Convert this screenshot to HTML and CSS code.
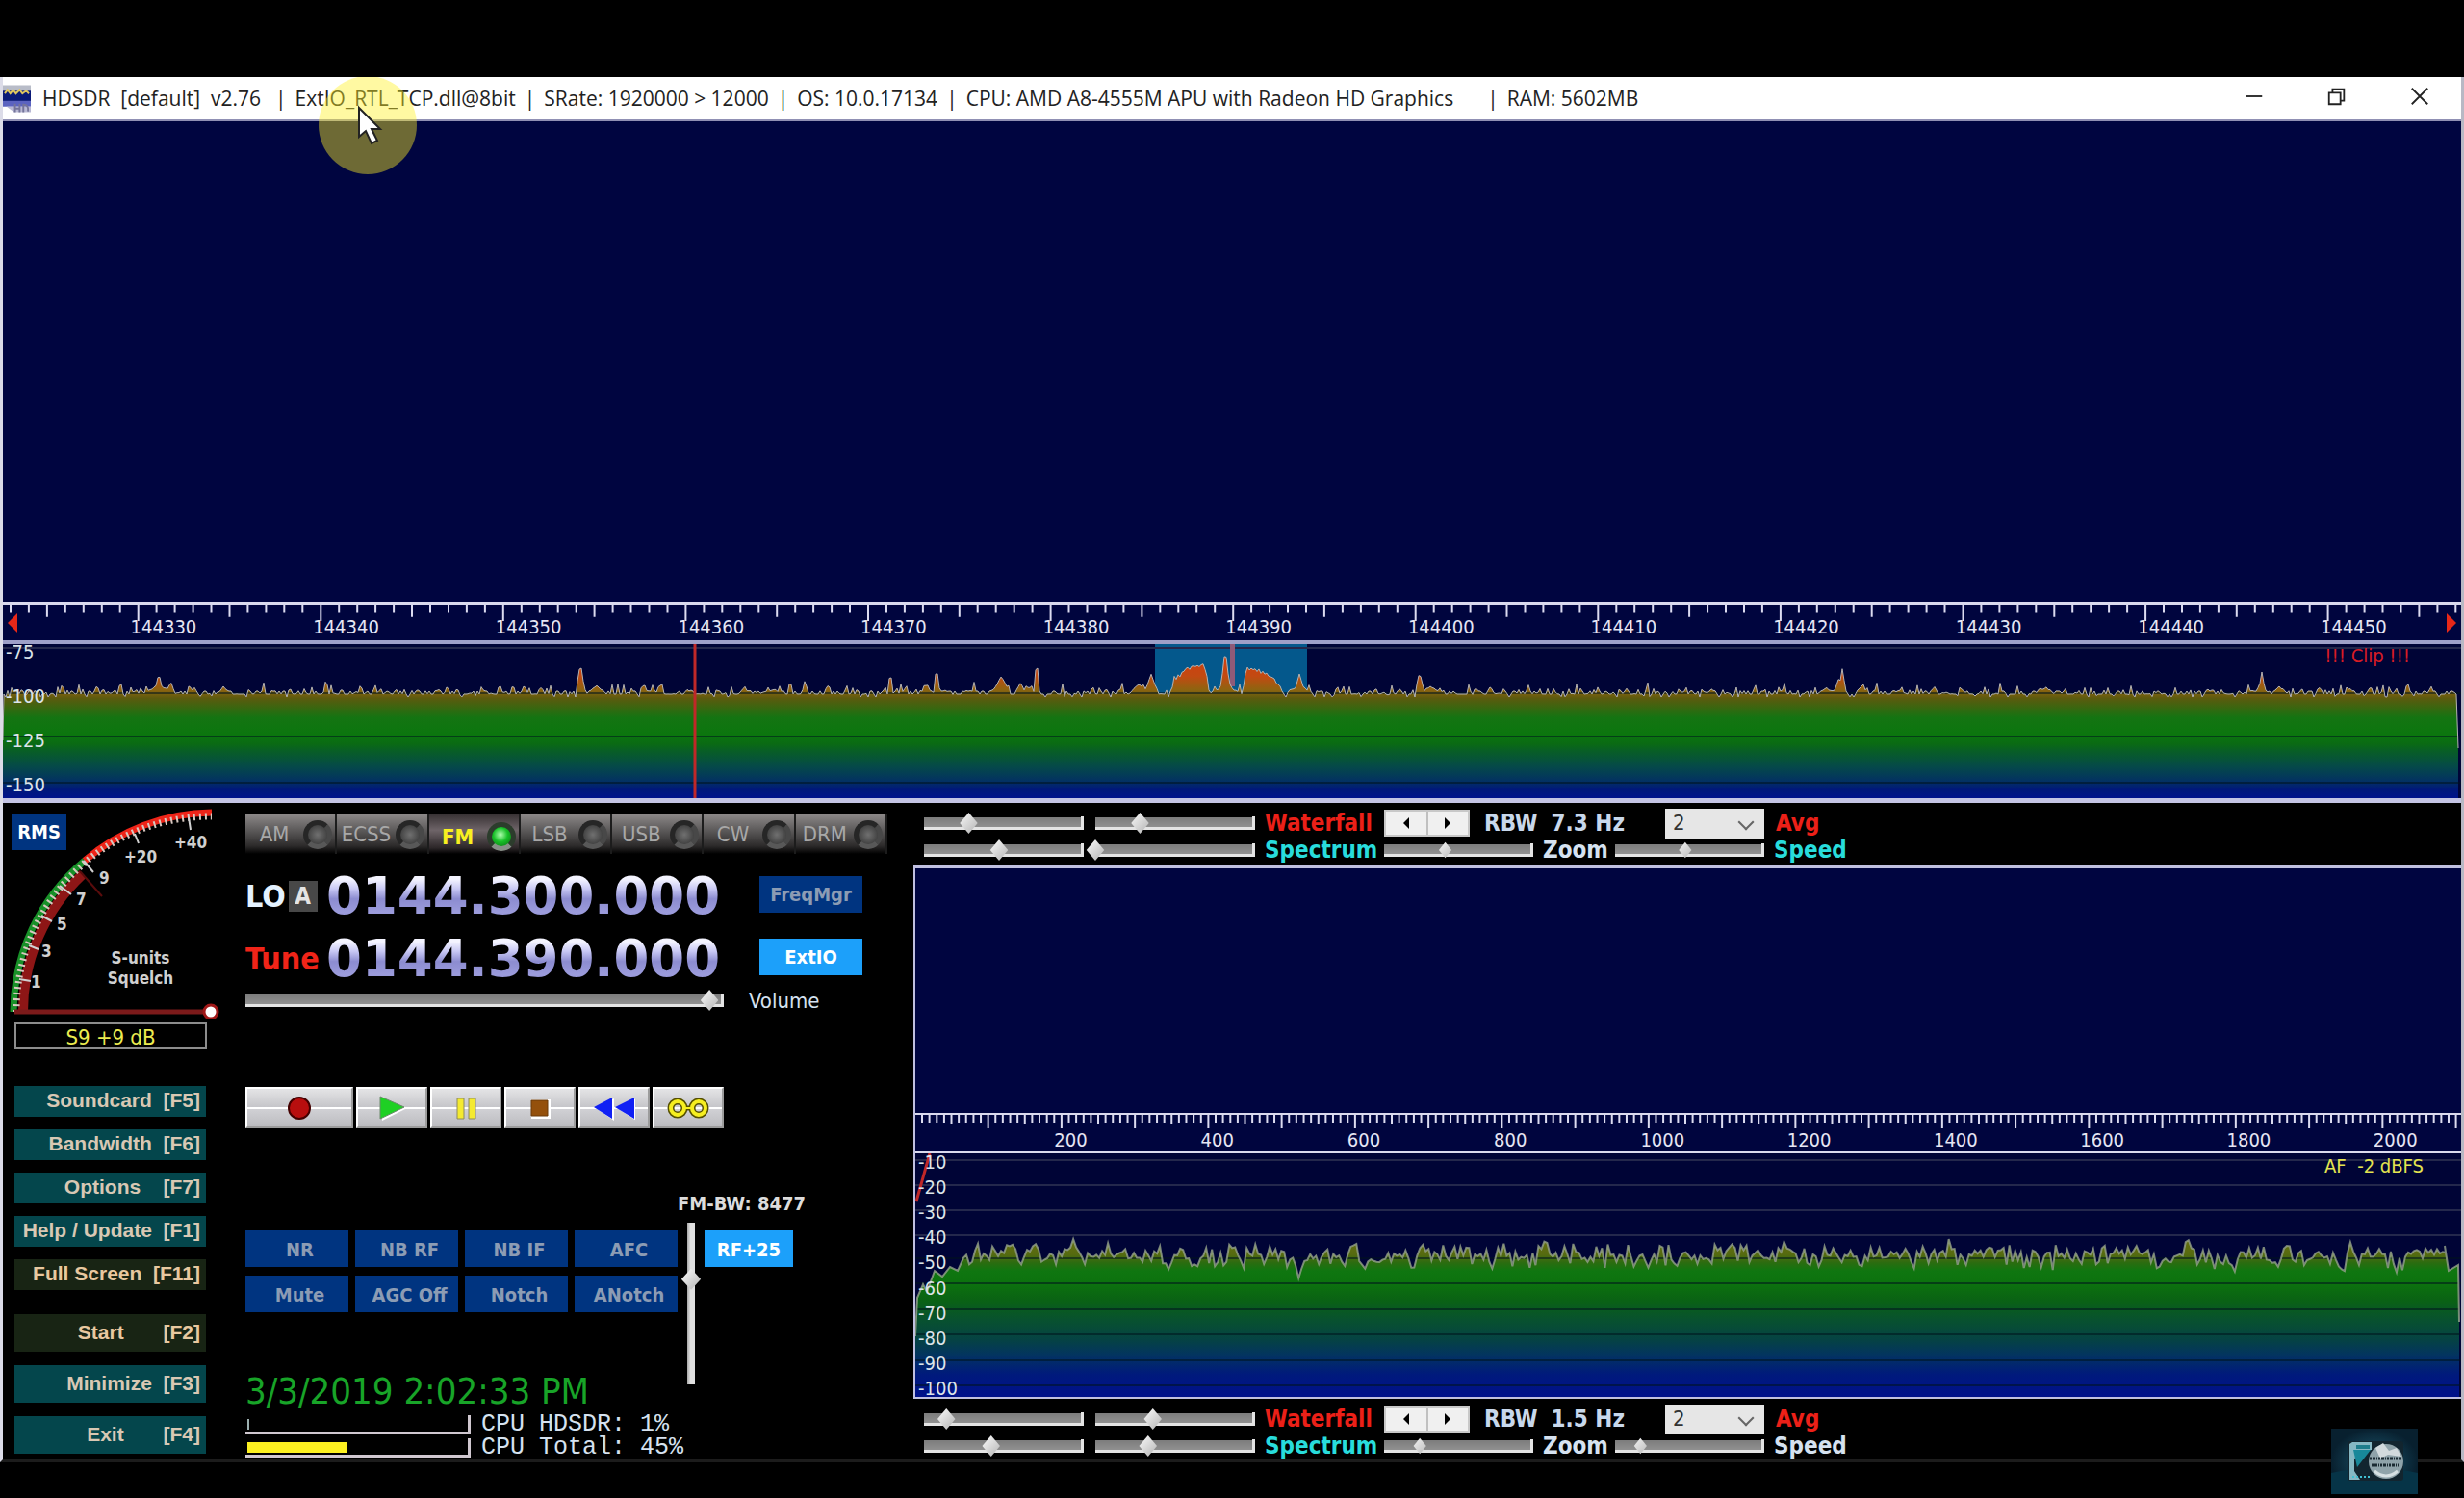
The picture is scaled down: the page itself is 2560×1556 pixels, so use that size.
FILE: index.html
```html
<!DOCTYPE html>
<html lang="en">
<head>
<meta charset="utf-8">
<title>HDSDR</title>
<link rel="stylesheet" href="styles.css">
</head>
<body>
<main class="window">
  <header class="titlebar">
    <svg class="app-icon" viewBox="0 0 30 30" aria-hidden="true">
      <rect width="30" height="8" fill="#b8bcc8"/><rect y="6" width="30" height="11" fill="#0a1a78"/>
      <path d="M2 9l3-4 3 4 3-4 3 4 4-4 3 4 4-3 3 3" stroke="#e0c860" stroke-width="2" fill="none"/>
      <rect y="17" width="30" height="6" fill="#5b63c0"/><path d="M4 23h26v6H12z" fill="#b9b9d4"/>
      <path d="M13 20v9M18 20v9M13 25h5M22 20v9M22 21q6 0 5 7" stroke="#74749a" stroke-width="2" fill="none"/>
    </svg>
    <p class="title">
      <span class="t-app">HDSDR&nbsp; [default]&nbsp; v2.76</span><span>|</span>
      <span>ExtIO_RTL_TCP.dll@8bit</span><span>|</span>
      <span>SRate: 1920000 &gt; 12000</span><span>|</span>
      <span>OS: 10.0.17134</span><span>|</span>
      <span class="t-cpu">CPU: AMD A8-4555M APU with Radeon HD Graphics</span><span>|</span>
      <span>RAM: 5602MB</span>
    </p>
    <div class="win-buttons">
      <button aria-label="Minimize window"><svg viewBox="0 0 24 24"><path d="M3 12h18" /></svg></button>
      <button aria-label="Restore window"><svg viewBox="0 0 24 24"><path d="M3 8h13v13H3zM7 8V4h13v13h-4"/></svg></button>
      <button aria-label="Close window"><svg viewBox="0 0 24 24"><path d="M3 3l18 18M21 3L3 21"/></svg></button>
    </div>
  </header>

  <section class="rf-waterfall" aria-label="RF waterfall"></section>

  <section class="scale rf-scale">
    <svg class="ticks" id="rf-ticks" viewBox="0 0 2554 36" preserveAspectRatio="none"></svg>
    <svg class="edge" viewBox="0 0 10 20"><path d="M10 0v20L0 10z"/></svg>
    <div class="rf-labels">
      <span></span><span>144330</span><span>144340</span><span>144350</span><span>144360</span><span>144370</span><span>144380</span><span>144390</span><span>144400</span><span>144410</span><span>144420</span><span>144430</span><span>144440</span><span>144450</span>
    </div>
    <svg class="edge edge-right" viewBox="0 0 10 20"><path d="M0 0v20L10 10z"/></svg>
  </section>

  <section class="chart rf-chart">
    <svg id="rf-trace" viewBox="0 0 2554 160" preserveAspectRatio="none">
      <defs>
        <linearGradient id="rf-fill" gradientUnits="userSpaceOnUse" x1="0" y1="16" x2="0" y2="160">
          <stop offset="0" stop-color="#d04010"/><stop offset=".12" stop-color="#c24a12"/><stop offset=".22" stop-color="#8e6410"/>
          <stop offset=".28" stop-color="#5c5a0e"/><stop offset=".42" stop-color="#147412"/><stop offset=".54" stop-color="#0b760e"/>
          <stop offset=".61" stop-color="#0a6a14"/><stop offset=".66" stop-color="#085e26"/><stop offset=".77" stop-color="#054a48"/>
          <stop offset=".87" stop-color="#033360"/><stop offset=".94" stop-color="#00187a"/><stop offset="1" stop-color="#00128c"/>
        </linearGradient>
      </defs>
      <rect x="1197" width="158" height="52" fill="#04588c"/>
      <path d="M0 4H2554" class="grid-light"/>
      <path class="fill" fill="url(#rf-fill)"/>
      <path d="M0 51H2554M0 96H2554M0 144H2554" class="grid-dark"/>
      <rect x="1275" width="5" height="44" fill="#8e5a78"/>
      <path class="line"/>
      <path d="M719 0V160" class="tune-line"/>
    </svg>
    <div class="db-labels"><span>-75</span><span>-100</span><span>-125</span><span>-150</span></div>
    <strong class="clip">!!! Clip !!!</strong>
  </section>

  <section class="lower">
    <aside class="left-col">
      <div class="meter">
        <svg class="gauge" viewBox="3 834 230 224" role="img" aria-label="S-meter">
          <path d="M24 1051A195 195 0 0 1 86 908" class="level"/>
          <path d="M14 1051A205 205 0 0 1 88 894" class="arc-green"/>
          <path d="M88 894A205 205 0 0 1 220 844" class="arc-red"/>
          <path d="M17 1051A202 202 0 0 1 220 848" class="arc-ticks"/>
          <path d="M83 905L106 931" class="needle"/>
          <path d="M20 1017l12 2M30 982l10 4M43 951l11 6M62 920l12 9M87 894l10 12M140 866l4 10M196 849l2 13" class="majors"/>
          <g class="gauge-text">
            <text x="32" y="1026">1</text><text x="43" y="994">3</text><text x="59" y="966">5</text><text x="79" y="940">7</text><text x="103" y="918">9</text>
            <text x="146" y="896" text-anchor="middle">+20</text><text x="198" y="881" text-anchor="middle">+40</text>
            <text x="146" y="1001" text-anchor="middle">S-units</text><text x="146" y="1022" text-anchor="middle">Squelch</text>
          </g>
          <path d="M15 1051H214" class="squelch"/>
          <circle cx="219" cy="1051" r="7" fill="#fff" stroke="#a01818" stroke-width="3"/>
        </svg>
        <button class="blue rms">RMS</button>
      </div>
      <output class="s-value">S9 +9 dB</output>
      <nav class="menu">
        <button>Soundcard&nbsp; [F5]</button>
        <button>Bandwidth&nbsp; [F6]</button>
        <button>Options&nbsp;&nbsp;&nbsp; [F7]</button>
        <button>Help / Update&nbsp; [F1]</button>
        <button class="dark">Full Screen&nbsp; [F11]</button>
      </nav>
      <nav class="menu tall">
        <button class="dark">Start&nbsp;&nbsp;&nbsp;&nbsp;&nbsp;&nbsp; [F2]</button>
        <button>Minimize&nbsp; [F3]</button>
        <button>Exit&nbsp;&nbsp;&nbsp;&nbsp;&nbsp;&nbsp; [F4]</button>
      </nav>
    </aside>

    <section class="center-col">
      <div class="modes">
        <button><span>AM</span><i></i></button><button><span>ECSS</span><i></i></button><button class="on"><span>FM</span><i></i></button><button><span>LSB</span><i></i></button><button><span>USB</span><i></i></button><button><span>CW</span><i></i></button><button><span>DRM</span><i></i></button>
      </div>
      <div class="freqs">
        <div class="freq-label lo"><span>LO</span><button>A</button></div>
        <output class="digits">0144.300.000</output>
        <button class="blue">FreqMgr</button>
        <div class="freq-label tune">Tune</div>
        <output class="digits">0144.390.000</output>
        <button class="blue lit">ExtIO</button>
      </div>
      <div class="volume">
        <input class="slider" id="volume" type="range" value="97">
        <label for="volume">Volume</label>
      </div>
      <div class="transport">
        <button aria-label="Record"><svg viewBox="0 0 44 30"><circle cx="22" cy="15" r="11" fill="#b80e0e" stroke="#400" stroke-width="2"/></svg></button>
        <button aria-label="Play"><svg viewBox="0 0 44 30"><path d="M12 4v24L36 16z" fill="#fff"/><path d="M10 3v23l25-12z" fill="#1fd024" stroke="#6a8a6a"/></svg></button>
        <button aria-label="Pause"><svg viewBox="0 0 44 30"><path d="M13 5h7v21h-7zM25 5h7v21h-7z" fill="#f4ea30" stroke="#8c8a60"/></svg></button>
        <button aria-label="Stop"><svg viewBox="0 0 44 30"><path d="M13 6h20v20H13z" fill="#fff"/><path d="M13 7h17v16H13z" fill="#94500c" stroke="#6a3a0a"/></svg></button>
        <button aria-label="Rewind"><svg viewBox="0 0 44 30"><path d="M22 5v23L3 15zM45 5v23L25 15z" fill="#fff"/><path d="M20 4v22L1 14zM43 4v22L23 14z" fill="#1020f4"/></svg></button>
        <button aria-label="Loop"><svg viewBox="0 0 44 30"><g fill="none"><circle cx="11" cy="15" r="7" stroke="#554f00" stroke-width="7"/><circle cx="33" cy="15" r="7" stroke="#554f00" stroke-width="7"/><path d="M17 15h10" stroke="#554f00" stroke-width="5"/><circle cx="11" cy="15" r="7" stroke="#f6ee20" stroke-width="4"/><circle cx="33" cy="15" r="7" stroke="#f6ee20" stroke-width="4"/><path d="M17 15h10" stroke="#f6ee20" stroke-width="2"/></g></svg></button>
      </div>
      <label class="fm-bw" for="gain">FM-BW: 8477</label>
      <div class="dsp">
        <div class="dsp-left">
          <div class="dsp-grid">
            <button class="blue">NR</button><button class="blue">NB RF</button><button class="blue">NB IF</button><button class="blue">AFC</button>
            <button class="blue">Mute</button><button class="blue">AGC Off</button><button class="blue">Notch</button><button class="blue">ANotch</button>
          </div>
          <time class="clock" datetime="2019-03-03T14:02:33">3/3/2019 2:02:33 PM</time>
          <div class="cpu"><span class="cpu-bar"><i class="idle"></i></span><span>CPU HDSDR: 1%</span></div>
          <div class="cpu"><span class="cpu-bar"><i class="busy" style="width:45%"></i></span><span>CPU Total: 45%</span></div>
        </div>
        <input class="vslider" id="gain" type="range" value="35">
        <button class="blue lit rf-gain">RF+25</button>
      </div>
    </section>

    <section class="right-col">
      <div class="controls">
        <div class="row">
          <input class="slider" type="range" value="28" aria-label="Waterfall low"><input class="slider" type="range" value="28" aria-label="Waterfall high">
          <span class="name red">Waterfall</span>
          <span class="steps"><button aria-label="RBW down"><svg viewBox="0 0 8 12"><path d="M7 0v12L1 6z"/></svg></button><button aria-label="RBW up"><svg viewBox="0 0 8 12"><path d="M1 0v12l6-6z"/></svg></button></span>
          <span class="rbw"><span>RBW</span><span>7.3 Hz</span></span>
          <span class="pick"><select id="avg1"><option>2</option></select></span>
          <label class="red" for="avg1">Avg</label>
        </div>
        <div class="row">
          <input class="slider" type="range" value="47" aria-label="Spectrum low"><input class="slider" type="range" value="0" aria-label="Spectrum high">
          <span class="name cyan">Spectrum</span>
          <input class="slider small" id="zoom1" type="range" value="41"><label class="zoom" for="zoom1">Zoom</label>
          <input class="slider small" id="speed1" type="range" value="47"><label class="cyan" for="speed1">Speed</label>
        </div>
      </div>

      <div class="af">
        <div class="af-waterfall"></div>
        <div class="scale af-scale">
          <svg class="ticks" id="af-ticks" viewBox="0 0 1605 38" preserveAspectRatio="none"></svg>
          <div class="af-labels"><span></span><span>200</span><span>400</span><span>600</span><span>800</span><span>1000</span><span>1200</span><span>1400</span><span>1600</span><span>1800</span><span>2000</span></div>
        </div>
        <div class="chart af-chart">
          <svg id="af-trace" viewBox="0 0 1605 253" preserveAspectRatio="none">
            <defs>
              <linearGradient id="af-fill" gradientUnits="userSpaceOnUse" x1="0" y1="85" x2="0" y2="253">
                <stop offset="0" stop-color="#6a7010"/><stop offset=".12" stop-color="#566a10"/><stop offset=".17" stop-color="#2c6c10"/><stop offset=".22" stop-color="#0f7610"/>
                <stop offset=".3" stop-color="#0c720e"/><stop offset=".4" stop-color="#0a6214"/><stop offset=".52" stop-color="#08522e"/>
                <stop offset=".65" stop-color="#054244"/><stop offset=".74" stop-color="#033460"/><stop offset=".86" stop-color="#001a7c"/><stop offset="1" stop-color="#00108a"/>
              </linearGradient>
            </defs>
            <path d="M0 7H1605M0 33H1605M0 59H1605M0 85H1605" class="grid-light"/>
            <path class="fill" fill="url(#af-fill)"/>
            <path d="M0 109H1605M0 135H1605M0 162H1605M0 188H1605M0 215H1605M0 241H1605" class="grid-dark"/>
            <path class="line af-line"/>
            <path d="M15 0L1 50" class="tune-line"/>
          </svg>
          <div class="db-labels"><span>-10</span><span>-20</span><span>-30</span><span>-40</span><span>-50</span><span>-60</span><span>-70</span><span>-80</span><span>-90</span><span>-100</span></div>
          <span class="af-level">AF&nbsp; -2 dBFS</span>
        </div>
      </div>

      <div class="controls">
        <div class="row">
          <input class="slider" type="range" value="14" aria-label="AF waterfall low"><input class="slider" type="range" value="36" aria-label="AF waterfall high">
          <span class="name red">Waterfall</span>
          <span class="steps"><button aria-label="AF RBW down"><svg viewBox="0 0 8 12"><path d="M7 0v12L1 6z"/></svg></button><button aria-label="AF RBW up"><svg viewBox="0 0 8 12"><path d="M1 0v12l6-6z"/></svg></button></span>
          <span class="rbw"><span>RBW</span><span>1.5 Hz</span></span>
          <span class="pick"><select id="avg2"><option>2</option></select></span>
          <label class="red" for="avg2">Avg</label>
        </div>
        <div class="row">
          <input class="slider" type="range" value="42" aria-label="AF spectrum low"><input class="slider" type="range" value="33" aria-label="AF spectrum high">
          <span class="name cyan">Spectrum</span>
          <input class="slider small" id="zoom2" type="range" value="24"><label class="zoom" for="zoom2">Zoom</label>
          <input class="slider small" id="speed2" type="range" value="17"><label for="speed2">Speed</label>
        </div>
      </div>
    </section>
  </section>

  <svg class="spotlight" viewBox="0 0 104 102" aria-hidden="true">
    <circle cx="52" cy="50" r="51" fill="#fff028" fill-opacity=".43"/>
    <path d="M43 32v30l7-6 6 13 6-3-6-12h9z" fill="#fff" stroke="#222" stroke-width="2"/>
  </svg>
</main>

<svg class="channel-logo" viewBox="0 0 90 68" aria-hidden="true">
  <defs><radialGradient id="lg"><stop offset="0" stop-color="#1d5a72"/><stop offset="1" stop-color="#08202f"/></radialGradient></defs>
  <rect width="90" height="68" fill="url(#lg)"/><path d="M0 46q45-10 90 0v22H0z" fill="#063447"/>
  <rect x="17" y="13" width="58" height="41" rx="3" fill="#12252f"/>
  <path d="M22 14h20v8H30l-6 10v12l6 9H19V16z" fill="#86b8c4"/><path d="M26 17h14v4H26z" fill="#1e7d8c"/>
  <path d="M23 22h18l-14 18z" fill="#18889a"/>
  <circle cx="57" cy="34" r="18" fill="#8fa3aa"/><path d="M46 20l8-5 6 8 8-3 5 9-14-2-8 4z" fill="#d2dadd"/>
  <path d="M40 31h34M42 38h28" stroke="#1a2a32" stroke-width="3" stroke-dasharray="2 1 3 1 1 1"/>
  <path d="M45 44q12 10 24 0" stroke="#d6e0e3" stroke-width="3" fill="none"/><path d="M22 50h18" stroke="#42c0d2" stroke-width="2" stroke-dasharray="2 2"/>
</svg>
<script src="spectrum.js"></script>
</body>
</html>
```
FILE: spectrum.js
```js
// Draws the frequency rulers and the two noise-floor traces.
function rng(seed) {
  return () => {
    seed = (seed * 1664525 + 1013904223) % 4294967296;
    return seed / 4294967296;
  };
}

function ruler(id, first, step, count, fiveEvery, tenEvery, sizes, width) {
  let d = '';
  for (let i = 0; i < count; i++) {
    const x = first + i * step;
    if (x < 4 || x > width - 2) continue;
    const len = i % tenEvery === 0 ? sizes[2] : i % fiveEvery === 0 ? sizes[1] : sizes[0];
    d += `M${x.toFixed(1)} 0v${len}`;
  }
  document.getElementById(id).innerHTML = `<path d="${d}"/>`;
}

function trace(id, points, height) {
  const svg = document.getElementById(id);
  const line = points.map(p => p[0].toFixed(1) + ' ' + p[1].toFixed(1)).join('L');
  const last = points[points.length - 1][0];
  svg.querySelector('.fill').setAttribute('d', `M0 ${height}L${line}L${last} ${height}Z`);
  svg.querySelector('.line').setAttribute('d', 'M' + line);
}

ruler('rf-ticks', 140.7 - 189.6, 18.958, 150, 5, 10, [8, 12, 16], 2554);
ruler('af-ticks', -0.6, 7.62, 215, 5, 10, [8, 10, 14], 1605);

// RF peaks: [x, y of tip, half width]
const peaks = [[122, 37, 3], [162, 28, 4], [162, 41, 14], [174, 38, 5], [230, 44, 8], [600, 18, 5], [617, 42, 10], [666, 39, 4],
  [800, 46, 14], [818, 37, 3], [833, 37, 3], [922, 26, 3], [960, 39, 4], [970, 20, 3], [1037, 33, 10], [1057, 39, 5],
  [1074, 12, 3], [1180, 40, 10], [1193, 31, 8], [1270, 2, 5], [1270, 40, 14], [1347, 31, 6], [1347, 43, 14],
  [1472, 28, 5], [1484, 43, 12], [1911, 25, 4], [1908, 34, 6], [1932, 40, 5], [1895, 45, 10], [2122, 44, 9],
  [2347, 28, 4], [2346, 40, 7], [2365, 43, 8]];
// Outline of the two FM lobes inside the passband
const lobes = [[1214, 51], [1216, 34], [1226, 27], [1232, 22], [1240, 22], [1247, 17], [1250, 24], [1254, 50],
  [1287, 52], [1291, 26], [1294, 22], [1304, 24], [1312, 28], [1318, 30], [1325, 38], [1328, 50]];
function lobeAt(x) {
  for (let i = 1; i < lobes.length; i++) {
    const [x0, y0] = lobes[i - 1], [x1, y1] = lobes[i];
    if (x >= x0 && x <= x1) return y0 + (y1 - y0) * (x - x0) / (x1 - x0);
  }
  return 60;
}

let rand = rng(20190303);
const rf = [[0, 100]];
for (let x = 1; x < 2551; x += 2) {
  const n = rand();
  let y = 52 - Math.pow(n, 6) * 10 + (rand() < 0.16 ? 3 : 0);
  if (rand() < 0.3) y -= 3;
  for (const [px, py, w] of peaks) {
    const k = Math.abs(x - px) / w;
    if (k < 1) y = Math.min(y, py + (50 - py) * k + rand() * 2);
  }
  const l = lobeAt(x);
  if (l < y) y = l + rand() * 5;
  rf.push([x, y]);
}
rf.push([2551, 108]);
trace('rf-trace', rf, 160);

rand = rng(144390);
const af = [[0, 190], [2, 150], [8, 136], [12, 144], [20, 122], [28, 128], [36, 118], [44, 122]];
let drift = 0;
for (let x = 50; x < 1590; x += 3) {
  drift = drift * 0.5 + (rand() - 0.5) * 12;
  const dip = rand() < 0.06 ? 9 : 0;
  af.push([x, 106 + drift + (rand() - 0.5) * 18 + dip]);
}
af.push([1588, 96], [1592, 122], [1602, 116], [1603, 175]);
trace('af-trace', af, 253);
```
FILE: styles.css
```css
* { box-sizing: border-box; }

body {
  margin: 0;
  min-height: 100vh;
  padding: 80px 0 37px;
  display: flex;
  flex-direction: column;
  background: #000;
  color: #d6e2f0;
  font-family: "DejaVu Sans Condensed", "DejaVu Sans", sans-serif;
  font-size: 20px;
  overflow-x: hidden;
}

button, input, select { font: inherit; color: inherit; border: 0; margin: 0; padding: 0; }

.window {
  flex: 1;
  display: flex;
  flex-direction: column;
  position: relative;
  border-left: 3px solid #dcdce8;
  border-right: 3px solid #b8b8c4;
  border-bottom: 3px solid #1c1c1c;
}

/* Title bar */
.titlebar {
  height: 46px;
  display: flex;
  align-items: center;
  background: #fff;
  border-bottom: 2px solid #9090b4;
  color: #222;
}
.app-icon { width: 29px; height: 30px; margin-top: 2px; }
.title {
  flex: 1;
  margin: 0 0 0 12px;
  display: flex;
  gap: 9px;
  font-family: "Open Sans", "Noto Sans", sans-serif;
  font-size: 21px;
  line-height: 42px;
  white-space: nowrap;
}
.t-app { margin-right: 6px; }
.t-cpu { margin-right: 26px; }
.win-buttons { display: flex; }
.win-buttons button { width: 86px; height: 40px; background: none; }
.win-buttons svg { width: 22px; height: 22px; fill: none; stroke: #222; stroke-width: 2; }

/* RF display */
.rf-waterfall { flex: 1; min-height: 200px; background: #000540; }
.scale, .chart { display: grid; }
.scale > *, .chart > * { grid-area: 1 / 1; }
.scale {
  background: #00053e;
  color: #e6e6f4;
  border-top: 3px solid #dadaee;
}
.ticks { width: 100%; height: 100%; }
.ticks path { stroke: #dcdcf0; stroke-width: 2; vector-effect: non-scaling-stroke; }
.rf-scale { height: 40px; }
.rf-labels, .af-labels { display: grid; align-items: end; line-height: 22px; }
.rf-labels { grid-template-columns: 1326fr repeat(12, 1896fr) 1460fr; padding-bottom: 4px; }
.edge { width: 10px; height: 20px; margin: 9px 5px; fill: #e82818; }
.edge-right { justify-self: end; }

.chart { background: #000436; border-top: 4px solid #9ea0c8; }
.chart svg { width: 100%; height: 100%; display: block; }
.grid-light, .grid-dark, .line, .tune-line { fill: none; vector-effect: non-scaling-stroke; }
.grid-light { stroke: #24284c; stroke-width: 2; }
.grid-dark { stroke: #00141e; stroke-opacity: .55; stroke-width: 2; }
.line { stroke: #b4b4b4; stroke-width: 1; }
.af-line { stroke: #96a48c; stroke-width: 2; stroke-opacity: .8; }
.tune-line { stroke: #c02828; stroke-width: 3; }
.rf-chart { height: 169px; border-bottom: 5px solid #c4c4e4; }
.db-labels {
  display: flex;
  flex-direction: column;
  justify-content: space-between;
  justify-self: start;
  padding-left: 3px;
  line-height: 18px;
  color: #dce4ea;
}
.rf-chart .db-labels { padding-bottom: 6px; line-height: 16px; }
.clip { justify-self: end; padding-right: 53px; font-weight: 400; line-height: 24px; color: #d81c24; }

/* Lower half */
.lower { display: grid; grid-template-columns: 246px 700px 1fr; background: #000; }

.left-col { display: flex; flex-direction: column; }
.meter { display: grid; height: 224px; }
.meter > * { grid-area: 1 / 1; }
.gauge { width: 230px; height: 224px; }
.gauge path { fill: none; }
.gauge .level { stroke: #8e1616; stroke-width: 10; }
.gauge .arc-green { stroke: #189028; stroke-width: 7; }
.gauge .arc-red { stroke: #ee2418; stroke-width: 7; }
.gauge .arc-ticks { stroke: #d8c8c0; stroke-width: 7; stroke-dasharray: 2 4; }
.gauge .needle { stroke: #5a0c0c; stroke-width: 2; }
.gauge .majors { stroke: #d0d0d0; stroke-width: 2; }
.gauge .squelch { stroke: #7c1a1a; stroke-width: 5; }
.gauge-text { fill: #d0d0d0; font-size: 17px; font-weight: 700; }

.blue {
  height: 38px;
  background: #003480;
  color: #8c9cb4;
  font-weight: 700;
  white-space: nowrap;
}
.blue.lit { background: #1ca0fa; color: #fff; }
.rms { width: 57px; margin: 11px 0 0 9px; color: #fff; }
.s-value {
  margin: 4px 34px 0 12px;
  height: 28px;
  border: 2px solid #8c8c8c;
  line-height: 28px;
  font-size: 22px;
  text-align: center;
  color: #ecec50;
}
.menu {
  margin: 38px 35px 0 12px;
  display: flex;
  flex-direction: column;
  gap: 13px;
}
.menu.tall { margin-top: 25px; gap: 14px; }
.menu button {
  height: 32px;
  padding: 0 6px 2px 0;
  background: #04464c;
  color: #d8c8b4;
  font: 700 21px/26px "Liberation Sans", sans-serif;
  text-align: right;
  white-space: nowrap;
}
.menu.tall button { height: 39px; }
.menu .dark { background: #182414; color: #e8c8a0; }

.center-col { padding: 12px 0 0 6px; }
.modes { display: flex; width: 667px; margin-bottom: 11px; }
.modes button {
  flex: 1;
  height: 41px;
  display: flex;
  align-items: center;
  border-right: 2px solid #1c1c1c;
  background: linear-gradient(#8c8888, #565454 45%, #2c2a2a 80%, #000);
  color: #a8a8a8;
  font-size: 22px;
}
.modes span { flex: 1; text-align: center; }
.modes i {
  width: 30px;
  height: 30px;
  margin-right: 3px;
  border-radius: 50%;
  border: 5px solid #262626;
  border-right-color: #484848;
  border-bottom-color: #585858;
  background: radial-gradient(#707070, #303030);
}
.modes .on { padding-top: 5px; color: #f8f020; font-weight: 700; background: linear-gradient(#383234, #6e6468 40%, #2c2628 85%, #000); }
.modes .on i { background: radial-gradient(circle at 45% 40%, #b0ffb0, #18c028 45%, #087010); border-color: #2c3c2c; border-bottom-color: #889088; }

.freqs {
  display: grid;
  grid-template-columns: 84px 450px 107px;
  grid-template-rows: 65px 65px;
  align-items: center;
}
.freqs .blue { margin-bottom: 3px; }
.freq-label { font-size: 32px; font-weight: 700; }
.lo { display: flex; align-items: center; gap: 3px; color: #e4f2ff; }
.lo button { width: 30px; height: 32px; background: #484848; color: #e4e4e4; font-size: 24px; }
.tune { color: #f02418; }
.digits {
  font: 700 53px/56px "DejaVu Sans", sans-serif;
  color: transparent;
  background: linear-gradient(#f4f4ff 18%, #c8c8f4 36%, #8c8cd0 55%, #9c9cdc 80%, #8080c4);
  -webkit-background-clip: text;
  background-clip: text;
}
.volume { display: flex; align-items: center; gap: 26px; height: 22px; font-size: 22px; }

/* Sliders: the groove is inset by half a thumb on both ends */
.slider {
  -webkit-appearance: none;
  appearance: none;
  flex: none;
  width: 188px;
  height: 24px;
  margin: 0 -11px;
  background:
    linear-gradient(#e4e4e4, #e4e4e4) 11px 16px / calc(100% - 22px) 3px no-repeat,
    linear-gradient(#e4e4e4, #e4e4e4) calc(100% - 11px) 5px / 3px 14px no-repeat,
    linear-gradient(#7c7c7c, #949494) 11px 6px / calc(100% - 22px) 12px no-repeat;
}
.slider::-webkit-slider-thumb {
  -webkit-appearance: none;
  width: 22px;
  height: 22px;
  background: linear-gradient(135deg, #fff, #b0b0b0);
  clip-path: polygon(50% 0, 92% 50%, 50% 100%, 8% 50%);
}
.slider.small { width: 177px; }
.slider.small::-webkit-slider-thumb { clip-path: polygon(50% 12%, 80% 50%, 50% 88%, 20% 50%); }
.volume .slider { width: 519px; }
.vslider {
  -webkit-appearance: none;
  appearance: none;
  writing-mode: vertical-lr;
  width: 24px;
  height: 190px;
  margin: -11px 2px -11px 0;
  background: linear-gradient(90deg, #a8a8a8, #e0e0e0 40%) 8px 11px / 8px 168px no-repeat;
}
.vslider::-webkit-slider-thumb {
  -webkit-appearance: none;
  width: 22px;
  height: 22px;
  background: linear-gradient(135deg, #fff, #b0b0b0);
  clip-path: polygon(50% 0, 96% 50%, 50% 100%, 4% 50%);
}

.transport { display: grid; width: 497px; grid-template-columns: 112px repeat(5, 1fr); gap: 3px; margin-top: 79px; }
.transport button {
  height: 43px;
  border: 2px solid #fff;
  border-right-color: #9c9c9c;
  border-bottom-color: #9c9c9c;
  background: linear-gradient(#e4e4e6, #c6c6ca 48%, #fff 49%, #fff 54%, #d0d0d4 55%, #bcbcc0);
}
.transport svg { width: 44px; height: 30px; display: block; margin: auto; }

.fm-bw { display: block; margin: 66px 0 8px 449px; line-height: 24px; font-weight: 700; color: #dcdcdc; }
.dsp { display: flex; align-items: flex-start; }
.dsp-left { width: 451px; padding-top: 8px; white-space: nowrap; }
.dsp-grid { display: grid; grid-template-columns: repeat(4, 107px); gap: 9px 7px; }
.dsp-grid .blue { padding: 2px 0 0 6px; }
.clock { display: block; margin: 61px 0 2px; font-size: 38px; line-height: 42px; color: #18a428; }
.cpu { display: flex; align-items: center; gap: 11px; height: 24px; font: 25px/24px "Liberation Mono", monospace; }
.cpu-bar { flex: none; width: 234px; height: 20px; padding: 4px 0 2px 2px; border: solid #d0c8d0; border-width: 0 3px 3px 0; }
.cpu-bar i { display: block; height: 11px; }
.cpu-bar .idle { width: 2px; background: #9cb0b0; }
.cpu-bar .busy { background: #fcf020; }
.rf-gain { width: 92px; margin-top: 8px; padding-top: 2px; }

/* Right panel */
.right-col { display: flex; flex-direction: column; }
.controls { padding: 7px 0 0 11px; font-size: 24px; font-weight: 700; }
.row { display: flex; align-items: center; height: 28px; line-height: 28px; white-space: nowrap; }
.row .slider + .slider { margin-left: 1px; }
.name { flex: none; width: 124px; margin-left: 10px; }
.red { color: #ec2018; }
.cyan { color: #28dcdc; }
.controls label { margin-left: 12px; }
.row .slider.small + label { margin-left: 10px; }
.controls .zoom { flex: none; width: 75px; }
.steps { display: flex; width: 89px; height: 28px; border: 2px solid #c8c8c8; background: #f0f0f0; }
.steps button { flex: 1; background: none; line-height: 0; }
.steps button + button { border-left: 2px solid #c0c0c0; }
.steps svg { width: 8px; height: 12px; fill: #000; }
.rbw { width: 203px; padding-left: 15px; display: flex; gap: 14px; color: #c8d8ec; }
.pick { position: relative; display: flex; font-size: 22px; }
.pick select {
  -webkit-appearance: none;
  appearance: none;
  width: 103px;
  height: 31px;
  padding-left: 8px;
  border-radius: 0;
  background: #e6e6e6;
  color: #333;
  font-weight: 400;
}
.pick::after {
  content: "";
  position: absolute;
  right: 13px;
  top: 8px;
  width: 10px;
  height: 10px;
  border: solid #666;
  border-width: 0 2px 2px 0;
  transform: rotate(45deg);
}

.af { flex: 1; display: flex; flex-direction: column; border: solid #c0c0e0; border-width: 3px 0 2px 2px; margin-top: 2px; }
.af-waterfall { flex: 1; background: #000540; }
.af-scale { height: 40px; border-top-width: 2px; }
.af-labels { grid-template-columns: 144fr repeat(9, 152fr) 91fr; padding-bottom: 1px; }
.af-chart { height: 255px; border-top: 2px solid #dadaee; }
.af-level { justify-self: end; padding-right: 39px; line-height: 26px; color: #e4e450; }

/* Pointer highlight and channel logo lie over the window */
.spotlight { position: absolute; left: 327px; top: 0; width: 104px; height: 102px; pointer-events: none; }
.channel-logo { position: absolute; right: 48px; bottom: 4px; width: 90px; height: 68px; }
```
